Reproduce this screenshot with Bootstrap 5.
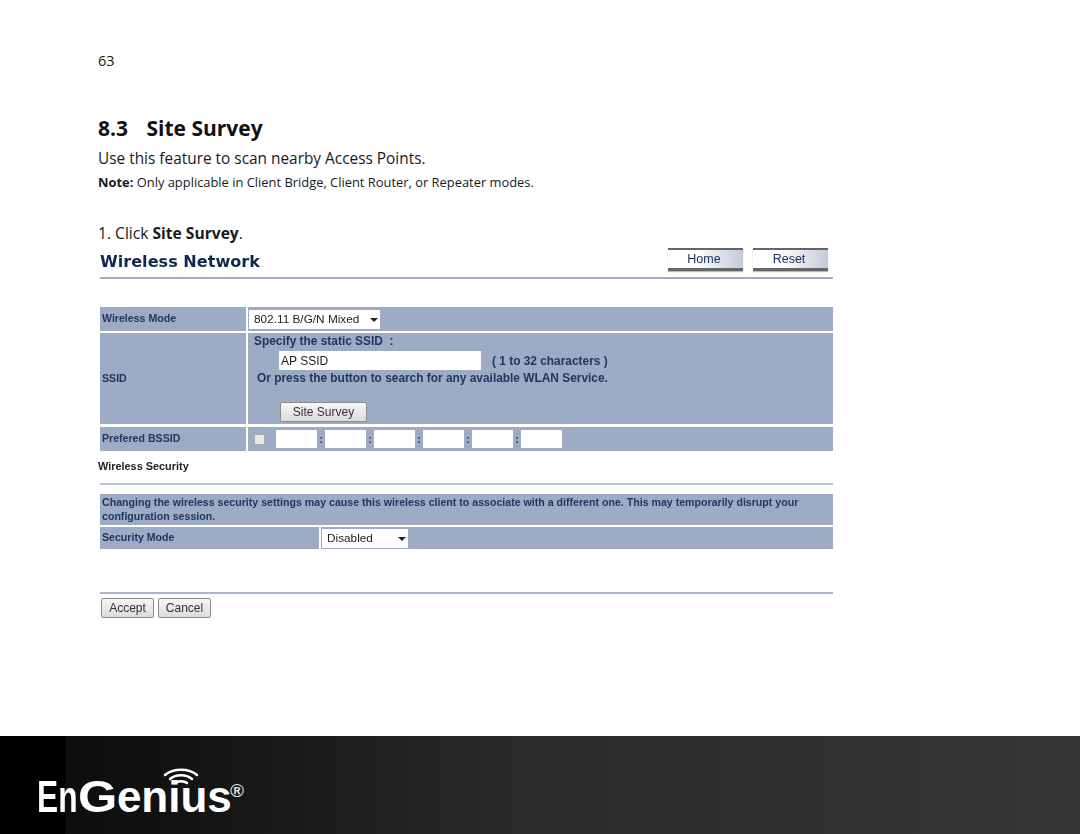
<!DOCTYPE html>
<html lang="en">
<head>
    <meta charset="UTF-8">
    <title>Site Survey</title>
    <link rel="stylesheet" href="https://cdn.jsdelivr.net/npm/bootstrap@5.3.0/dist/css/bootstrap.min.css">
    <style>
        html, body { height: 834px; overflow: hidden; }
        body { font-family: "Open Sans", sans-serif; color: #1a1a1a; background: #fff; }
        .doc-page { height: 736px; padding: 51px 0 0 98px; }
        .page-num { font-size: 14.5px; line-height: 20px; margin-bottom: 40px; }
        .doc-title { font-size: 21px; font-weight: 700; line-height: 34px; margin: 0; color: #111; }
        .doc-title span { margin-right: 13px; }
        .doc-lead { font-size: 15.4px; line-height: 20px; margin: 4px 0 0; }
        .doc-note { font-size: 12.9px; line-height: 18px; margin: 4px 0 0; }
        .doc-step { font-size: 15.6px; line-height: 20px; margin: 32px 0 0; }

        .shot { width: 733px; margin-left: 2px; font-family: "Liberation Sans", sans-serif; color: #22355f; font-size: 11px; font-weight: 700; filter: blur(.35px); }
        .shot-head { height: 29px; margin-top: 5px; padding-right: 5px; }
        .shot-title { font-family: "DejaVu Sans", sans-serif; font-size: 16.1px; font-weight: 700; color: #14284f; margin: 0; line-height: 24px; padding-top: 2px; }
        .nav-pair { gap: 10px; }
        .nav-btn { width: 75px; height: 23px; font-size: 12.5px; font-weight: 400; line-height: 18px; text-align: center; padding-right: 3px; color: #1d3160; border-top: 2px solid #666; border-bottom: 3px solid #666; background: linear-gradient(90deg, #fff 35%, #c3cbd8); box-shadow: 0 1px 1px #bbb; }
        .rule { height: 2px; background: #a3a9c2; }
        .rule-b { background: #a9b6cc; }
        .cfg-row { display: grid; gap: 2px; background: #fff; }
        .cols-a { grid-template-columns: 146px 1fr; }
        .cols-b { grid-template-columns: 219px 1fr; }
        .cfg-cell { background: #9dacc4; display: flex; align-items: center; padding-left: 2px; font-size: 10.6px; }
        .r-mode { height: 24px; margin-top: 28px; }
        .r-ssid { height: 91px; margin-top: 2px; }
        .r-bssid { height: 24px; margin-top: 3px; }
        .fake-select { background: #fff; color: #222; font-weight: 400; font-size: 11.8px; height: 19px; padding: 1px 2px 0 5px; margin-left: -1px; }
        .sel-mode { width: 131px; }
        .sel-sec { width: 86px; }
        .caret-down { border-left: 4px solid transparent; border-right: 4px solid transparent; border-top: 4px solid #222; margin-top: 1px; }
        .ssid-body { display: block; padding: 0 0 0 6px; font-size: 11.9px; line-height: 16px; }
        .ssid-line { height: 19px; margin-top: 2px; }
        .ssid-input.form-control { width: 202px; height: 19px; padding: 0 2px; margin: 0 11px 0 25px; border: 0; border-radius: 0; font-size: 12px; color: #222; font-family: inherit; }
        .ssid-hint { padding-left: 3px; margin-top: 0; }
        .gray-btn.btn { font-size: 12px; line-height: 17px; color: #333; padding: 0; border: 1px solid #8d8d8d; border-radius: 2px; background: linear-gradient(#f6f6f6, #dcdcdc); font-weight: 400; font-family: inherit; height: 20px; }
        .survey-btn.btn { width: 87px; margin: 16px 0 0 26px; display: block; }
        .bssid-check.form-check-input { width: 11px; height: 11px; margin: 0 11px 0 4px; border-radius: 0; border: 1px solid #aaa; background-color: #e8e8e8; }
        .mac-box.form-control { width: 41px; height: 18px; padding: 0; border: 0; border-radius: 0; }
        .mac-sep { width: 8px; text-align: center; font-size: 11px; }
        .sec-label { font-size: 10.9px; color: #222; margin: 8px 0 0 -2px; line-height: 14px; }
        .rule-sec { margin-top: 10px; background: #c0c5d6; }
        .sec-warn { height: 31px; margin-top: 9px; background: #9dacc4; padding: 2px 2px 0; font-size: 10.62px; line-height: 13.5px; }
        .r-sec { height: 22px; margin-top: 2px; }
        .rule-act { margin-top: 43px; }
        .act-bar { margin-top: 4px; gap: 4px; padding-left: 1px; }
        .act-btn.btn { width: 53px; }

        .foot-bar { height: 98px; position: relative; background: linear-gradient(90deg, #000 0 65px, #0e0e0e 65px, #111 150px, #1b1b1b 300px, #2a2a2a 520px, #303030 800px, #373737 1080px); }
        .foot-brand { position: absolute; left: 37px; top: 36px; color: #fff; font-family: "Liberation Sans", sans-serif; font-weight: 700; font-size: 44px; line-height: 50px; white-space: nowrap; display: flex; align-items: baseline; }
        .brand-en { display: inline-block; transform: scaleX(.72); transform-origin: left; margin-right: -15.700px; }
        .brand-g { display: inline-block; transform: scaleX(1.15); transform-origin: left; margin-right: 5.100px; }
        .foot-wifi { position: absolute; left: 163px; top: 32px; }
        .foot-reg { position: absolute; left: 230px; top: 43px; color: #ddd; font-family: "Liberation Sans", sans-serif; font-weight: 700; font-size: 19px; line-height: 24px; }
    </style>
</head>
<body>
<div class="doc-page">
    <div class="page-num">63</div>
    <h2 class="doc-title"><span>8.3</span> Site Survey</h2>
    <p class="doc-lead">Use this feature to scan nearby Access Points.</p>
    <p class="doc-note"><strong>Note:</strong> Only applicable in Client Bridge, Client Router, or Repeater modes.</p>
    <p class="doc-step">1. Click <strong>Site Survey</strong>.</p>

    <div class="shot">
        <div class="shot-head d-flex justify-content-between">
            <h3 class="shot-title">Wireless Network</h3>
            <div class="d-flex nav-pair">
                <div class="nav-btn">Home</div>
                <div class="nav-btn">Reset</div>
            </div>
        </div>
        <div class="rule"></div>

        <div class="cfg-row cols-a r-mode">
            <div class="cfg-cell">Wireless Mode</div>
            <div class="cfg-cell"><div class="fake-select sel-mode d-flex align-items-center justify-content-between">802.11 B/G/N Mixed<i class="caret-down"></i></div></div>
        </div>
        <div class="cfg-row cols-a r-ssid">
            <div class="cfg-cell">SSID</div>
            <div class="cfg-cell ssid-body">
                <div>Specify the static SSID &nbsp;:</div>
                <div class="ssid-line d-flex align-items-center">
                    <input class="form-control ssid-input" type="text" value="AP SSID">
                    <span>( 1 to 32 characters )</span>
                </div>
                <div class="ssid-hint">Or press the button to search for any available WLAN Service.</div>
                <button class="btn gray-btn survey-btn" type="button">Site Survey</button>
            </div>
        </div>
        <div class="cfg-row cols-a r-bssid">
            <div class="cfg-cell">Prefered BSSID</div>
            <div class="cfg-cell">
                <input class="form-check-input bssid-check" type="checkbox">
                <input class="form-control mac-box" type="text"><span class="mac-sep">:</span>
                <input class="form-control mac-box" type="text"><span class="mac-sep">:</span>
                <input class="form-control mac-box" type="text"><span class="mac-sep">:</span>
                <input class="form-control mac-box" type="text"><span class="mac-sep">:</span>
                <input class="form-control mac-box" type="text"><span class="mac-sep">:</span>
                <input class="form-control mac-box" type="text">
            </div>
        </div>

        <div class="sec-label">Wireless Security</div>
        <div class="rule rule-sec"></div>
        <div class="sec-warn">Changing the wireless security settings may cause this wireless client to associate with a different one. This may temporarily disrupt your configuration session.</div>
        <div class="cfg-row cols-b r-sec">
            <div class="cfg-cell">Security Mode</div>
            <div class="cfg-cell"><div class="fake-select sel-sec d-flex align-items-center justify-content-between">Disabled<i class="caret-down"></i></div></div>
        </div>

        <div class="rule rule-b rule-act"></div>
        <div class="d-flex act-bar">
            <button class="btn gray-btn act-btn" type="button">Accept</button>
            <button class="btn gray-btn act-btn" type="button">Cancel</button>
        </div>
    </div>
</div>

<div class="foot-bar">
    <div class="foot-brand"><span class="brand-en">En</span><span class="brand-g">G</span><span>enius</span></div>
    <svg class="foot-wifi" width="36" height="20" viewBox="0 0 36 20" fill="none" stroke="#fff" stroke-width="2.500" stroke-linecap="round">
        <path d="M2 7C10 0 26 0 34 7"/>
        <path d="M7 11C13 6 23 6 29 11"/>
        <path d="M12 15C15 12.500 21 12.500 24 15"/>
    </svg>
    <div class="foot-reg">®</div>
</div>
</body>
</html>
